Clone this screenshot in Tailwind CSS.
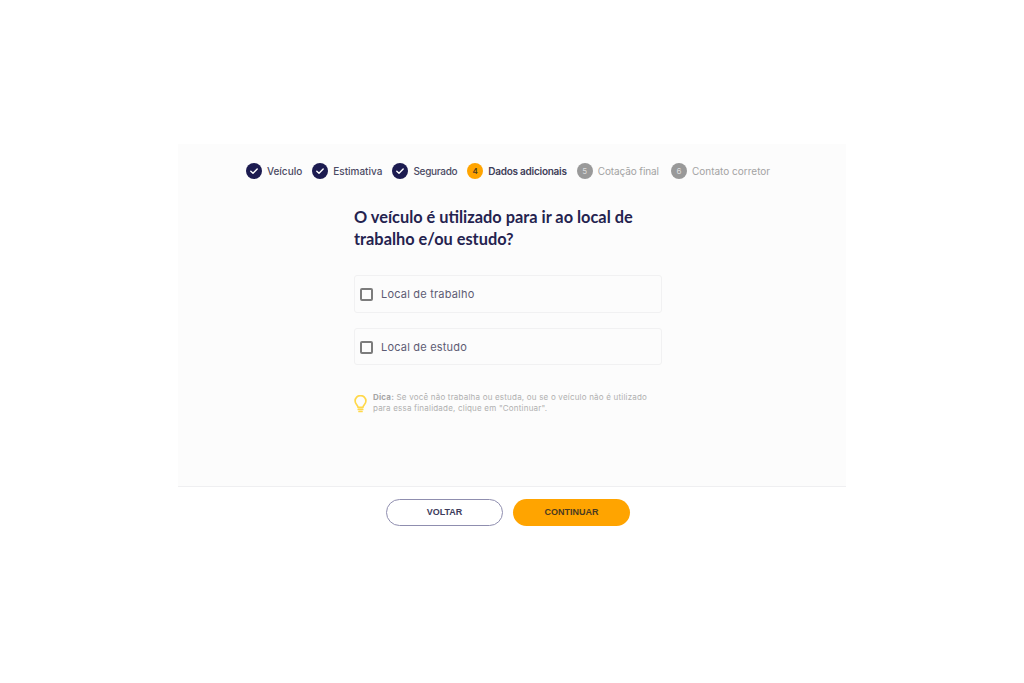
<!DOCTYPE html>
<html lang="pt"><head><meta charset="utf-8">
<script src="https://cdn.jsdelivr.net/npm/@tailwindcss/browser@4"></script>
</head>
<body class="bg-white font-['Inter','Liberation_Sans',sans-serif] h-[683px] overflow-hidden">
<main class="w-[668px] ml-[178px] pt-[144px]">
  <section class="h-[343px] bg-[#fcfcfc] border-b border-[#efeff1] pt-[19px]">
    <ol class="flex justify-center gap-[10px] pr-[8px] text-[10px] h-[16px]">
      <li class="flex items-center gap-[5px] text-[#4b4a63] font-medium"><span class="w-[16px] h-[16px] rounded-full bg-[#1c1b50] flex items-center justify-center"><svg width="10" height="10" viewBox="0 0 10 10" fill="none" stroke="#fff" stroke-width="1.4" stroke-linecap="round" stroke-linejoin="round"><path d="M1.8 5.2l2.2 2.1 4.2-4.4"/></svg></span>Veículo</li>
      <li class="flex items-center gap-[5px] text-[#4b4a63] font-medium"><span class="w-[16px] h-[16px] rounded-full bg-[#1c1b50] flex items-center justify-center"><svg width="10" height="10" viewBox="0 0 10 10" fill="none" stroke="#fff" stroke-width="1.4" stroke-linecap="round" stroke-linejoin="round"><path d="M1.8 5.2l2.2 2.1 4.2-4.4"/></svg></span>Estimativa</li>
      <li class="flex items-center gap-[5px] text-[#4b4a63] font-medium tracking-[-0.3px]"><span class="w-[16px] h-[16px] rounded-full bg-[#1c1b50] flex items-center justify-center"><svg width="10" height="10" viewBox="0 0 10 10" fill="none" stroke="#fff" stroke-width="1.4" stroke-linecap="round" stroke-linejoin="round"><path d="M1.8 5.2l2.2 2.1 4.2-4.4"/></svg></span>Segurado</li>
      <li class="flex items-center gap-[5px] text-[#3f3e58] font-semibold tracking-[-0.25px]"><span class="w-[16px] h-[16px] rounded-full bg-[#ffa400] flex items-center justify-center text-[8px] text-[#4b3a20] tracking-normal">4</span>Dados adicionais</li>
      <li class="flex items-center gap-[5px] mr-[2px] text-[#a3a3a3] tracking-[-0.1px]"><span class="w-[16px] h-[16px] rounded-full bg-[#999999] flex items-center justify-center text-[8px] text-[#dddddd] tracking-normal">5</span>Cotação final</li>
      <li class="flex items-center gap-[5px] text-[#a3a3a3]"><span class="w-[16px] h-[16px] rounded-full bg-[#999999] flex items-center justify-center text-[8px] text-[#dddddd] tracking-normal">6</span>Contato corretor</li>
    </ol>
    <div class="w-[308px] ml-[176px] mt-[27px]">
      <h1 class="font-['Lato',sans-serif] font-bold text-[16.35px] leading-[22px] text-[#24234f]">O veículo é utilizado para ir ao local de trabalho e/ou estudo?</h1>
      <label class="mt-[25px] h-[38px] flex items-center gap-[8px] pl-[5px] border border-[#f1f1f2] rounded-[3px] bg-[#fcfcfc] text-[11px] tracking-[0.2px] text-[#5c5b73]"><span class="w-[13px] h-[13px] border-2 border-[#7c7c7c] rounded-[2px]"></span>Local de trabalho</label>
      <label class="mt-[15px] h-[37px] pt-[1px] flex items-center gap-[8px] pl-[5px] border border-[#f1f1f2] rounded-[3px] bg-[#fcfcfc] text-[11px] tracking-[0.2px] text-[#5c5b73]"><span class="w-[13px] h-[13px] border-2 border-[#7c7c7c] rounded-[2px]"></span>Local de estudo</label>
      <div class="mt-[27px] flex items-start gap-[6px]">
        <svg class="mt-[3px] shrink-0" width="13" height="18" viewBox="0 0 13 18" fill="none" stroke="#ffd84a" stroke-width="1.7" stroke-linecap="round" stroke-linejoin="round"><path d="M4 12.3c0-1.7-2.9-3.2-2.9-6.3a5.4 5.4 0 0 1 10.8 0c0 3.1-2.9 4.6-2.9 6.3z"/><path d="M4.3 14.4h4.4M5 16.5h3"/></svg>
        <p class="text-[8px] leading-[11px] tracking-[0.2px] text-[#b0b0b0]"><b class="font-bold text-[#a5a5a5]">Dica:</b> Se você não trabalha ou estuda, ou se o veículo não é utilizado para essa finalidade, clique em "Continuar".</p>
      </div>
    </div>
  </section>
  <div class="flex justify-center gap-[10px] mt-[12px] pr-[8px]">
    <button class="w-[117px] h-[27px] rounded-full border border-[#8f8eaf] bg-white text-[9px] font-bold text-[#3d3c5c] font-['Liberation_Sans',sans-serif]">VOLTAR</button>
    <button class="w-[117px] h-[27px] rounded-full bg-[#ffa400] text-[9px] font-bold text-[#4b3a20] font-['Liberation_Sans',sans-serif]">CONTINUAR</button>
  </div>
</main>
</body></html>
